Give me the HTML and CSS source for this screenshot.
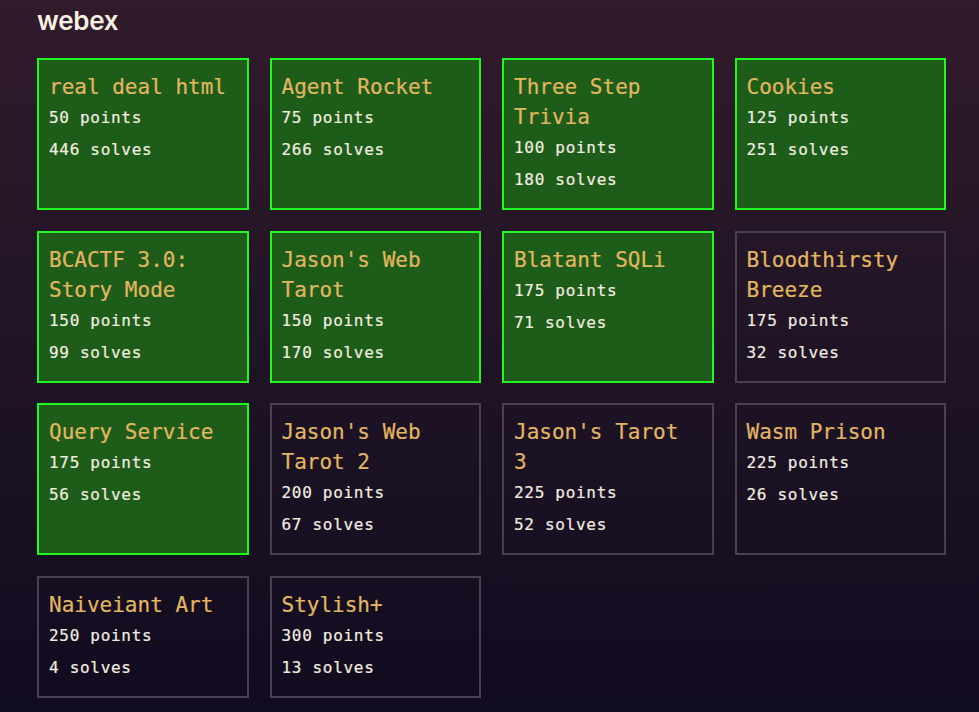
FILE: index.html
```html
<!DOCTYPE html>
<html>
<head>
<meta charset="utf-8">
<link rel="stylesheet" href="styles.css">
</head>
<body>
<main class="page">
  <h1 class="title">webex</h1>
  <div class="grid">
    <div class="card solved"><div class="name">real deal html</div><div class="meta">50 points</div><div class="meta">446 solves</div></div>
    <div class="card solved"><div class="name">Agent Rocket</div><div class="meta">75 points</div><div class="meta">266 solves</div></div>
    <div class="card solved"><div class="name">Three Step Trivia</div><div class="meta">100 points</div><div class="meta">180 solves</div></div>
    <div class="card solved"><div class="name">Cookies</div><div class="meta">125 points</div><div class="meta">251 solves</div></div>
    <div class="card solved"><div class="name">BCACTF 3.0: Story Mode</div><div class="meta">150 points</div><div class="meta">99 solves</div></div>
    <div class="card solved"><div class="name">Jason's Web Tarot</div><div class="meta">150 points</div><div class="meta">170 solves</div></div>
    <div class="card solved"><div class="name">Blatant SQLi</div><div class="meta">175 points</div><div class="meta">71 solves</div></div>
    <div class="card"><div class="name">Bloodthirsty Breeze</div><div class="meta">175 points</div><div class="meta">32 solves</div></div>
    <div class="card solved"><div class="name">Query Service</div><div class="meta">175 points</div><div class="meta">56 solves</div></div>
    <div class="card"><div class="name">Jason's Web Tarot 2</div><div class="meta">200 points</div><div class="meta">67 solves</div></div>
    <div class="card"><div class="name">Jason's Tarot 3</div><div class="meta">225 points</div><div class="meta">52 solves</div></div>
    <div class="card"><div class="name">Wasm Prison</div><div class="meta">225 points</div><div class="meta">26 solves</div></div>
    <div class="card"><div class="name">Naiveiant Art</div><div class="meta">250 points</div><div class="meta">4 solves</div></div>
    <div class="card"><div class="name">Stylish+</div><div class="meta">300 points</div><div class="meta">13 solves</div></div>
  </div>
</main>
</body>
</html>
```
FILE: styles.css
```css
html, body {
  margin: 0;
  padding: 0;
}
body {
  min-height: 712px;
  background: linear-gradient(180deg, #311b2a 0%, #1f1426 50%, #110b1f 100%);
  color: #f3ede0;
  font-family: "DejaVu Sans Mono", "Liberation Mono", monospace;
}
.page {
  padding: 0 37px;
}
.title {
  margin: 5px 0 21px;
  font-family: Inter, "Open Sans", sans-serif;
  font-size: 26px;
  line-height: 32px;
  font-weight: 600;
  color: #f7f0e2;
  letter-spacing: -0.3px;
}
.grid {
  width: 909px;
  display: grid;
  grid-template-columns: repeat(4, 1fr);
  column-gap: 21px;
  row-gap: 20.5px;
}
.card {
  border: 2px solid #4a3f53;
  padding: 12px 10px;
  background: transparent;
}
.card.solved {
  border-color: #22f722;
  background: #1e5d19;
}
.name {
  font-size: 21px;
  line-height: 30px;
  color: #e3b660;
  -webkit-text-stroke: 0.2px #e3b660;
}
.meta {
  font-size: 16px;
  line-height: 32px;
  letter-spacing: 0.7px;
  color: #f3ede0;
  -webkit-text-stroke: 0.2px #f3ede0;
}
```
